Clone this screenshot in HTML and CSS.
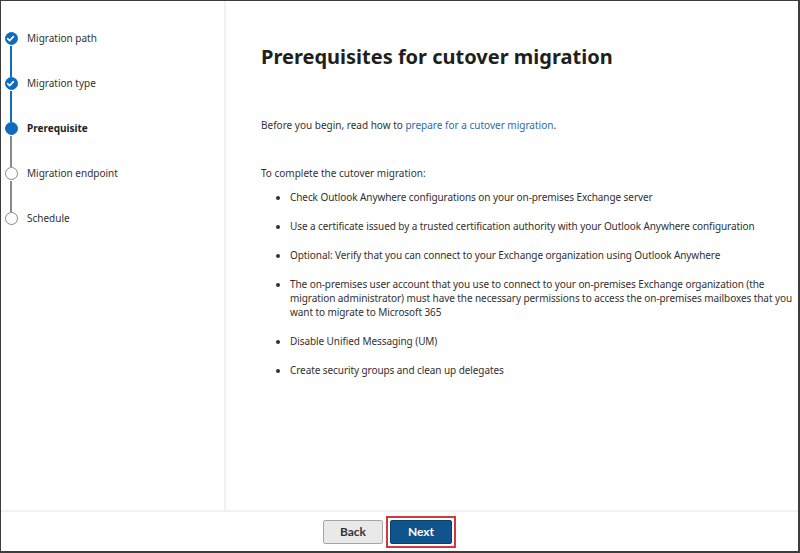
FILE: index.html
```html
<!DOCTYPE html>
<html lang="en">
<head>
  <meta charset="UTF-8">
  <title>Prerequisites for cutover migration</title>
  <link rel="stylesheet" href="styles.css">
</head>
<body>

<div class="frame">
  <div class="wizard">
    <div class="steps">
      <div class="step done">
        <div class="marker">
          <span class="dot">
            <svg width="13" height="13" viewBox="0 0 13 13"><path d="M3.6 6.7 L5.6 8.6 L9.4 4.6" fill="none" stroke="#fff" stroke-width="1.6" stroke-linecap="round" stroke-linejoin="round"/></svg>
          </span>
          <span class="line"></span>
        </div>
        <div class="label">Migration path</div>
      </div>
      <div class="step done">
        <div class="marker">
          <span class="dot">
            <svg width="13" height="13" viewBox="0 0 13 13"><path d="M3.6 6.7 L5.6 8.6 L9.4 4.6" fill="none" stroke="#fff" stroke-width="1.6" stroke-linecap="round" stroke-linejoin="round"/></svg>
          </span>
          <span class="line"></span>
        </div>
        <div class="label">Migration type</div>
      </div>
      <div class="step current">
        <div class="marker">
          <span class="dot"></span>
          <span class="line"></span>
        </div>
        <div class="label">Prerequisite</div>
      </div>
      <div class="step">
        <div class="marker">
          <span class="dot"></span>
          <span class="line"></span>
        </div>
        <div class="label">Migration endpoint</div>
      </div>
      <div class="step last">
        <div class="marker">
          <span class="dot"></span>
        </div>
        <div class="label">Schedule</div>
      </div>
    </div>

    <div class="main">
      <h1>Prerequisites for cutover migration</h1>
      <p class="intro">Before you begin, read how to <a href="#">prepare for a cutover migration</a>.</p>
      <p class="lead">To complete the cutover migration:</p>
      <ul class="todo">
        <li>Check Outlook Anywhere configurations on your on-premises Exchange server</li>
        <li>Use a certificate issued by a trusted certification authority with your Outlook Anywhere configuration</li>
        <li>Optional: Verify that you can connect to your Exchange organization using Outlook Anywhere</li>
        <li>The on-premises user account that you use to connect to your on-premises Exchange organization (the migration administrator) must have the necessary permissions to access the on-premises mailboxes that you want to migrate to Microsoft 365</li>
        <li>Disable Unified Messaging (UM)</li>
        <li>Create security groups and clean up delegates</li>
      </ul>
    </div>
  </div>

  <div class="footer">
    <button class="btn back">Back</button>
    <span class="highlight"><button class="btn next">Next</button></span>
  </div>
</div>

</body>
</html>
```

FILE: styles.css
```css
body { margin: 0; background: #fff; font-family: "Noto Sans", "Open Sans", sans-serif; color: #323130; }
.frame { width: 800px; height: 553px; box-sizing: border-box; border: 1px solid #3c3c3c; border-right-width: 2px; border-bottom-width: 2px; display: flex; flex-direction: column; }
.wizard { flex: 1; display: flex; min-height: 0; }

.steps { width: 225px; border-right: 2px solid #f1f1f1; padding-top: 31px; box-sizing: border-box; }
.step { display: flex; height: 45px; }
.marker { width: 20px; margin-right: 6px; display: flex; flex-direction: column; align-items: center; }
.dot { width: 13px; height: 13px; border-radius: 50%; box-sizing: border-box; border: 1.5px solid #8a8886; flex: none; display: flex; }
.dot svg { margin: -1.5px; }
.done .dot, .current .dot { background: #0f6cbd; border-color: #0f6cbd; }
.line { width: 1.5px; flex: 1; background: #8a8886; margin: 1px 0 0; }
.done .line { background: #0f6cbd; }
.label { font-size: 10px; line-height: 13px; }
.current .label { font-weight: bold; color: #201f1e; }

.main { flex: 1; padding: 41px 0 0 35px; }
h1 { font-size: 20px; font-weight: bold; color: #201f1e; margin: 0 0 46px; line-height: 30px; }
p { font-size: 10px; line-height: 14px; margin: 0; }
.intro { margin-bottom: 34px; }
a { color: #2b6aa8; text-decoration: none; }
.todo { font-size: 10px; line-height: 14px; letter-spacing: -0.08px; margin: 10px -1px 0 0; padding-left: 29px; }
.todo li { margin-bottom: 15px; padding-left: 0; }

.footer { height: 39px; border-top: 2px solid #f1f1f1; display: flex; align-items: center; padding-left: 322px; gap: 3px; }
.btn { font-family: "Lato", "Noto Sans", sans-serif; font-size: 12px; font-weight: bold; height: 24px; border-radius: 2px; cursor: pointer; }
.back { width: 60px; background: #e9e9e9; border: 1px solid #a6a6a6; color: #333; }
.highlight { border: 2px solid #d4373c; padding: 2px; display: flex; }
.next { width: 62px; background: #0f548c; border: 1px solid #0a3f6c; color: #fff; }
```
